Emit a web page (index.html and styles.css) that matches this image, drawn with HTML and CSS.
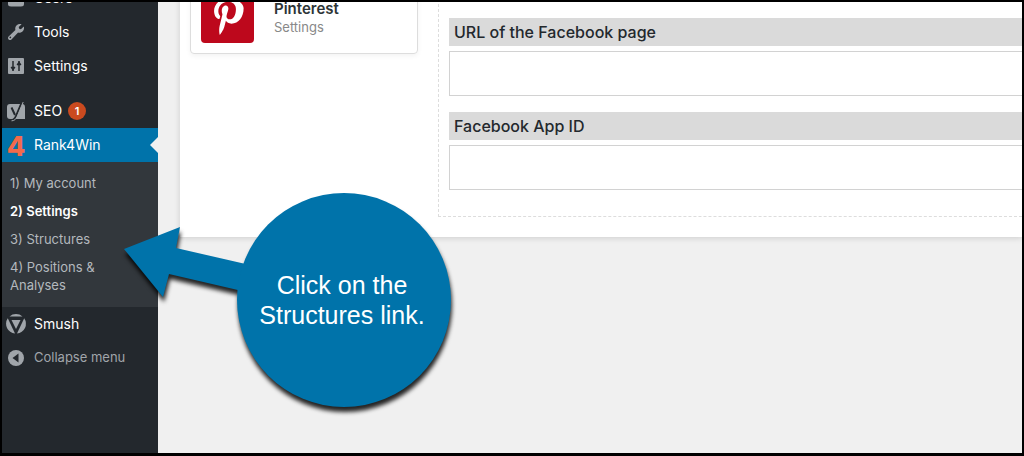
FILE: index.html
```
<!DOCTYPE html>
<html lang="en">

<head>
    <meta charset="UTF-8">
    <meta name="viewport" content="width=device-width, initial-scale=1.0">
    <title>Rank4Win - Settings</title>
    <link rel="stylesheet" href="styles.css">
</head>

<body>
    <div class="frame">
        <nav class="sidebar">
            <ul class="menu">
                <li>
                    <a href="#">
                        <svg class="icon" viewBox="0 0 20 20">
                            <circle cx="10" cy="6" r="4" />
                            <path d="M2 11h16v5q0 2.500-3 2.500H5q-3 0-3-2.500z" />
                        </svg>
                        Users
                    </a>
                </li>
                <li>
                    <a href="#">
                        <svg class="icon" viewBox="0 0 20 20">
                            <path d="M16.700 9.300c-1.300 1.300-3 1.800-4.600 1.300l-6.600 6.800c-.8.800-2.100.8-2.900 0s-.8-2.100 0-2.900l6.800-6.600C8.900 6.300 9.400 4.600 10.700 3.300c1.300-1.300 3.300-1.700 4.900-1.100L12.700 5.100l.5 1.700 1.700.5 2.900-2.900c.6 1.600.2 3.600-1.100 4.900zM4.900 16a.8.800 0 1 0-1.200-1.200A.8.800 0 0 0 4.900 16z" />
                        </svg>
                        Tools
                    </a>
                </li>
                <li>
                    <a href="#">
                        <svg class="icon" viewBox="0 0 20 20">
                            <path d="M3 2h14a1 1 0 0 1 1 1v14a1 1 0 0 1-1 1H3a1 1 0 0 1-1-1V3a1 1 0 0 1 1-1z" />
                            <path class="line thin" d="M7 5v10M5 11.500h4M13 5v10M11 8.500h4" />
                            <path class="dark" d="M4.500 11h5L7 15zM10.500 9h5L13 5z" />
                        </svg>
                        Settings
                    </a>
                </li>
                <li class="separator"></li>
                <li>
                    <a href="#">
                        <svg class="icon" viewBox="0 0 20 20">
                            <path d="M4 3h13v0q2 .5 2 2.500v12.500H4a3 3 0 0 1-3-3V6a3 3 0 0 1 3-3z" />
                            <path class="line" d="M5.500 6.500l3.500 7.500" />
                            <path class="line" d="M16 1L10 15Q8.500 19 5 19" />
                            <path class="edge" d="M17.200 1L11.200 15.500Q9.500 19.800 5.500 19.800" />
                        </svg>
                        SEO <span class="badge">1</span>
                    </a>
                </li>
                <li class="current">
                    <a href="#"><span class="icon four">4</span>Rank4Win</a>
                    <ul class="submenu">
                        <li><a href="#">1) My account</a></li>
                        <li><a href="#" class="active">2) Settings</a></li>
                        <li><a href="#">3) Structures</a></li>
                        <li><a href="#">4) Positions &amp; Analyses</a></li>
                    </ul>
                </li>
                <li>
                    <a href="#">
                        <svg class="icon" viewBox="0 0 20 20">
                            <path d="M3.500 2.500a10 10 0 0 1 13 0z" />
                            <path d="M1.800 4.300L9 19.600A9.800 9.800 0 0 1 1.800 4.300z" />
                            <path d="M18.200 4.300L11 19.600A9.800 9.800 0 0 0 18.200 4.300z" />
                            <path d="M5.500 6h9L10 15z" />
                        </svg>
                        Smush
                    </a>
                </li>
                <li>
                    <button class="collapse" type="button">
                        <svg class="icon" viewBox="0 0 20 20">
                            <circle cx="10" cy="11" r="8" />
                            <path class="dark" d="M12.500 6.500v9L6.500 11z" />
                        </svg>
                        Collapse menu
                    </button>
                </li>
            </ul>
        </nav>

        <main class="content">
            <div class="panel">
                <div class="networks">
                    <a class="network" href="#">
                        <span class="logo">
                            <svg viewBox="0 0 24 24">
                                <path d="M12.400 2C7.200 2 4.500 5.500 4.500 8.900c0 2 .8 3.900 2.500 4.500.3.100.5 0 .6-.3l.3-1c.1-.3 0-.4-.2-.7-.5-.6-.8-1.300-.8-2.400 0-2.900 2.200-5.200 5.300-5.200 2.900 0 4.500 1.700 4.500 4.100 0 3.100-1.400 5.700-3.500 5.700-1.100 0-2-.9-1.700-2.100.3-1.400 1-2.900 1-3.900 0-.9-.5-1.700-1.500-1.700-1.200 0-2.200 1.300-2.200 3 0 1.100.4 1.800.4 1.800l-1.600 6.600c-.5 2-.1 4.400 0 4.700 0 .1.200.2.300.1.100-.2 1.700-2.200 2.300-4.200l.9-3.500c.4.800 1.700 1.600 3.100 1.600 4 0 6.800-3.700 6.800-8.600C21 4.900 17.800 2 12.400 2z" />
                            </svg>
                        </span>
                        <span class="info">
                            <strong>Pinterest</strong>
                            <small>Settings</small>
                        </span>
                    </a>
                </div>
                <form class="fields">
                    <div class="field">
                        <label for="fb-url">URL of the Facebook page</label>
                        <input type="text" id="fb-url">
                    </div>
                    <div class="field">
                        <label for="fb-app">Facebook App ID</label>
                        <input type="text" id="fb-app">
                    </div>
                </form>
            </div>
        </main>

        <div class="callout">
            <svg viewBox="0 0 328 216">
                <path d="M1 57L57 35L53 56L140 76L132 102L46 82L40 105z" />
                <circle cx="221" cy="108" r="107" />
            </svg>
            <p>Click on the Structures link.</p>
        </div>
    </div>
</body>

</html>
```
FILE: styles.css
```
* {
    box-sizing: border-box;
}

body {
    margin: 0;
    font-family: Inter, "Liberation Sans", sans-serif;
    font-size: 14px;
    color: #23282d;
}

ul {
    list-style: none;
    margin: 0;
    padding: 0;
}

a {
    color: inherit;
    text-decoration: none;
}

.frame {
    position: relative;
    display: flex;
    height: 100vh;
    overflow: hidden;
    border: 2px solid #000;
    border-bottom-width: 3px;
    background-color: #f0f0f0;
}

/* sidebar */
.sidebar {
    flex: none;
    width: 156px;
    background-color: #23282d;
    color: #fff;
}

/* page is scrolled, Users is half hidden */
.menu {
    margin-top: -21px;
}

.menu > li > a,
.collapse {
    display: flex;
    align-items: center;
    gap: 8px;
    width: 100%;
    height: 34px;
    padding: 0 4px 1px;
}

.separator {
    height: 11px;
}

.icon {
    flex: none;
    width: 20px;
    height: 20px;
    fill: #a0a5aa;
    overflow: visible;

    .line {
        fill: none;
        stroke: #23282d;
        stroke-width: 2;
    }

    .thin {
        stroke-width: 1.5;
    }

    .edge {
        fill: none;
        stroke: #a0a5aa;
        stroke-width: 1;
    }

    .dark {
        fill: #23282d;
    }
}

.four {
    font-size: 27px;
    font-weight: 800;
    line-height: 24px;
    text-align: center;
    color: #f26a4b;
}

.badge {
    width: 18px;
    height: 18px;
    border-radius: 50%;
    background-color: #ca4a1f;
    font-size: 11px;
    font-weight: 600;
    line-height: 18px;
    text-align: center;
    margin-left: -2px;
}

.current > a {
    position: relative;
    background-color: #0073aa;
}

.current > a::after {
    content: "";
    position: absolute;
    right: 0;
    top: 9px;
    border: 8px solid transparent;
    border-right-color: #f0f0f0;
    border-left: 0;
}

.submenu {
    padding: 7px 8px 8px;
    background-color: #32373c;
    font-size: 13px;
    line-height: 18px;
    color: #b4b9be;

    & a {
        display: block;
        padding: 5px 40px 5px 0;
    }

    .active {
        font-weight: 600;
        color: #fff;
    }
}

.collapse {
    height: 32px;
    border: 0;
    background: none;
    font: inherit;
    font-size: 13px;
    color: #a0a5aa;
}

/* content */
.content {
    flex: 1;
    min-width: 0;
    padding-left: 22px;
}

.panel {
    display: flex;
    gap: 20px;
    margin-top: -23px;
    padding: 0 0 20px 10px;
    background-color: #fff;
    box-shadow: 0 1px 6px rgba(0, 0, 0, .15);
}

.networks {
    flex: none;
    width: 228px;
}

.network {
    display: flex;
    gap: 20px;
    padding: 10px;
    border: 1px solid #ddd;
    border-radius: 4px;
    box-shadow: 0 2px 5px rgba(0, 0, 0, .05);
}

.logo {
    width: 53px;
    height: 53px;
    padding: 5px;
    border-radius: 4px;
    background-color: #bd081c;

    & svg {
        display: block;
        fill: #fff;
    }
}

.info {
    display: flex;
    flex-direction: column;
    justify-content: center;
    padding-top: 2px;
    line-height: 18px;

    & strong {
        font-size: 15px;
        font-weight: 600;
        color: #2d3436;
    }

    & small {
        font-size: 13px;
        color: #888;
    }
}

.fields {
    flex: 1;
    display: flex;
    flex-direction: column;
    gap: 16px;
    padding: 39px 0 26px 10px;
    border: 1px dashed #ddd;
    border-width: 0 0 1px 1px;
}

.field {
    display: flex;
    flex-direction: column;
    gap: 5px;

    & label {
        padding: 0 5px;
        background-color: #dadada;
        font-size: 16px;
        font-weight: 500;
        line-height: 28px;
    }

    & input {
        height: 45px;
        border: 1px solid #d2d2d2;
        border-right: 0;
        background-color: #fff;
    }
}

/* arrow bubble over the page */
.callout {
    position: absolute;
    left: 121px;
    top: 190px;
    width: 328px;
    height: 216px;

    & svg {
        display: block;
        overflow: visible;
        fill: #0073aa;
        filter: drop-shadow(1px 5px 2px rgba(0, 0, 0, .85));
    }

    & p {
        position: absolute;
        right: 0;
        top: 78px;
        width: 218px;
        margin: 0;
        padding: 0 20px;
        font-family: "Liberation Sans", sans-serif;
        font-size: 25px;
        line-height: 30px;
        text-align: center;
        color: #fff;
    }
}
```
